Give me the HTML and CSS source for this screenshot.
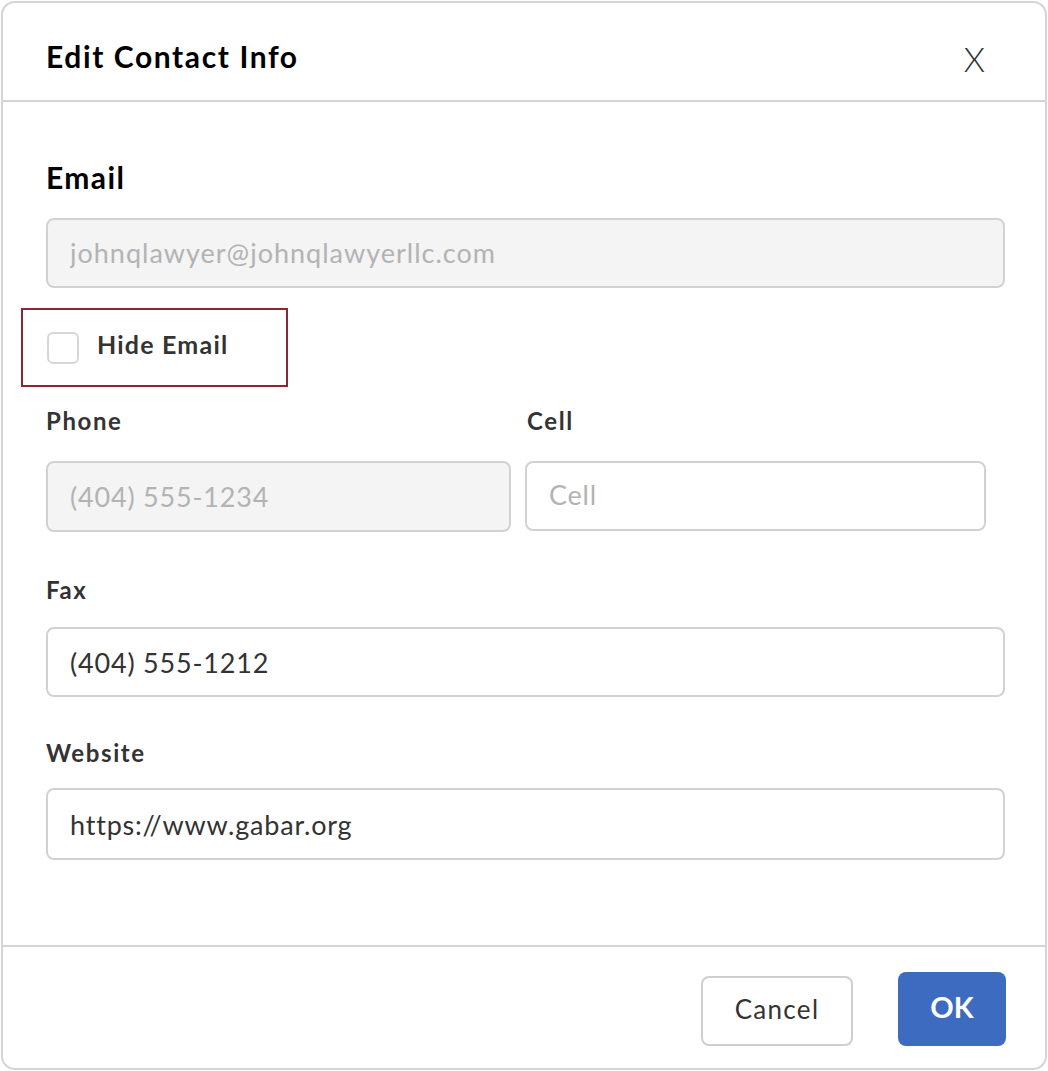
FILE: index.html
```html
<!DOCTYPE html>
<html lang="en">
<head>
<meta charset="utf-8">
<title>Edit Contact Info</title>
<link rel="stylesheet" href="styles.css">
</head>
<body>
<div class="dialog">
  <div class="header">
    <h1 class="title">Edit Contact Info</h1>
    <button class="close" type="button">X</button>
  </div>
  <div class="body">
    <div class="label label-lg">Email</div>
    <input class="field field-disabled field-full field-email" type="text" readonly placeholder="johnqlawyer@johnqlawyerllc.com">
    <label class="hide-box">
      <input class="check" type="checkbox">
      <span class="hide-text">Hide Email</span>
    </label>
    <div class="row">
      <div class="col">
        <div class="label">Phone</div>
        <input class="field field-disabled field-phone" type="text" readonly placeholder="(404) 555-1234">
      </div>
      <div class="col">
        <div class="label label-cell">Cell</div>
        <input class="field field-cell" type="text" placeholder="Cell">
      </div>
    </div>
    <div class="label label-fax">Fax</div>
    <input class="field field-full field-fax" type="text" value="(404) 555-1212">
    <div class="label label-web">Website</div>
    <input class="field field-full field-web" type="text" value="https://www.gabar.org">
  </div>
  <div class="footer">
    <button class="btn btn-cancel" type="button">Cancel</button>
    <button class="btn btn-ok" type="button">OK</button>
  </div>
</div>
</body>
</html>
```
FILE: styles.css
```css
* { box-sizing: border-box; }
html, body { margin: 0; padding: 0; background: #fff; }
body {
  font-family: Lato, "Noto Sans", "Liberation Sans", sans-serif;
  color: #333;
}
.dialog {
  margin: 1px;
  width: 1046px;
  height: 1069px;
  border: 2px solid #d4d4d4;
  border-radius: 14px;
  display: flex;
  flex-direction: column;
  overflow: hidden;
}
.header {
  height: 99px;
  border-bottom: 2px solid #d4d4d4;
  display: flex;
  justify-content: space-between;
  align-items: flex-start;
  padding: 38px 60px 0 43px;
  flex: none;
}
.title {
  margin: 0;
  font-size: 30px;
  line-height: 30px;
  font-weight: 700;
  color: #000;
  letter-spacing: 1.6px;
}
.close {
  border: 0;
  background: none;
  padding: 0;
  margin-top: 1px;
  font-family: Lato, "Noto Sans", sans-serif;
  font-size: 34px;
  line-height: 34px;
  font-weight: 300;
  color: #333;
  cursor: pointer;
}
.body {
  flex: 1;
  padding: 60px 39px 0 43px;
  display: flex;
  flex-direction: column;
  align-items: flex-start;
}
.label {
  font-size: 24px;
  line-height: 30px;
  font-weight: 700;
  color: #333;
  letter-spacing: 1.6px;
}
.label-lg {
  font-size: 30px;
  color: #000;
  letter-spacing: 1.4px;
}
.field {
  display: block;
  height: 70px;
  border: 2px solid #d2d2d2;
  border-radius: 8px;
  background: #fff;
  padding: 0 22px;
  font-family: Lato, "Noto Sans", sans-serif;
  font-size: 27px;
  color: #333;
  outline: none;
  letter-spacing: 0.8px;
}
.field::placeholder { color: #b3b3b3; opacity: 1; }
.field-disabled { background: #f4f4f4; }
.field-full { width: 959px; margin-top: 24px; }
.field-email { margin-top: 26px; letter-spacing: 1px; padding-bottom: 2px; }
.hide-box {
  margin: 20px 0 0 -25px;
  width: 267px;
  height: 79px;
  border: 2px solid #8c2534;
  display: flex;
  align-items: center;
  padding-left: 24px;
  gap: 18px;
}
.check {
  appearance: none;
  -webkit-appearance: none;
  margin: 0;
  width: 32px;
  height: 32px;
  border: 2px solid #d6d6d6;
  border-radius: 6px;
  background: #fff;
  flex: none;
}
.hide-text {
  font-size: 25px;
  line-height: 30px;
  font-weight: 700;
  color: #333;
  letter-spacing: 1.2px;
  margin-top: -8px;
}
.row {
  display: grid;
  grid-template-columns: 465px 461px;
  column-gap: 14px;
  margin-top: 19px;
}
.col { display: flex; flex-direction: column; }
.label-cell { padding-left: 2px; }
.field-phone { width: 465px; height: 71px; margin-top: 25px; }
.field-cell { width: 461px; margin-top: 25px; padding-bottom: 4px; }
.label-fax { margin-top: 43px; }
.field-fax { margin-top: 22px; }
.label-web { margin-top: 41px; }
.field-web { margin-top: 20px; height: 72px; }
.footer {
  flex: none;
  height: 123px;
  border-top: 2px solid #d4d4d4;
  display: flex;
  justify-content: flex-end;
  align-items: flex-end;
  gap: 45px;
  padding: 0 39px 22px 0;
}
.btn {
  font-family: Lato, "Noto Sans", sans-serif;
  border-radius: 8px;
  cursor: pointer;
  padding: 0 0 5px 0;
}
.btn-cancel {
  width: 152px;
  height: 70px;
  border: 2px solid #cfcfcf;
  background: #fff;
  color: #333;
  font-size: 26px;
  font-weight: 400;
  letter-spacing: 1.3px;
}
.btn-ok {
  width: 108px;
  height: 74px;
  border: 0;
  background: #3d6bbf;
  color: #fff;
  font-size: 29px;
  font-weight: 700;
}
```
